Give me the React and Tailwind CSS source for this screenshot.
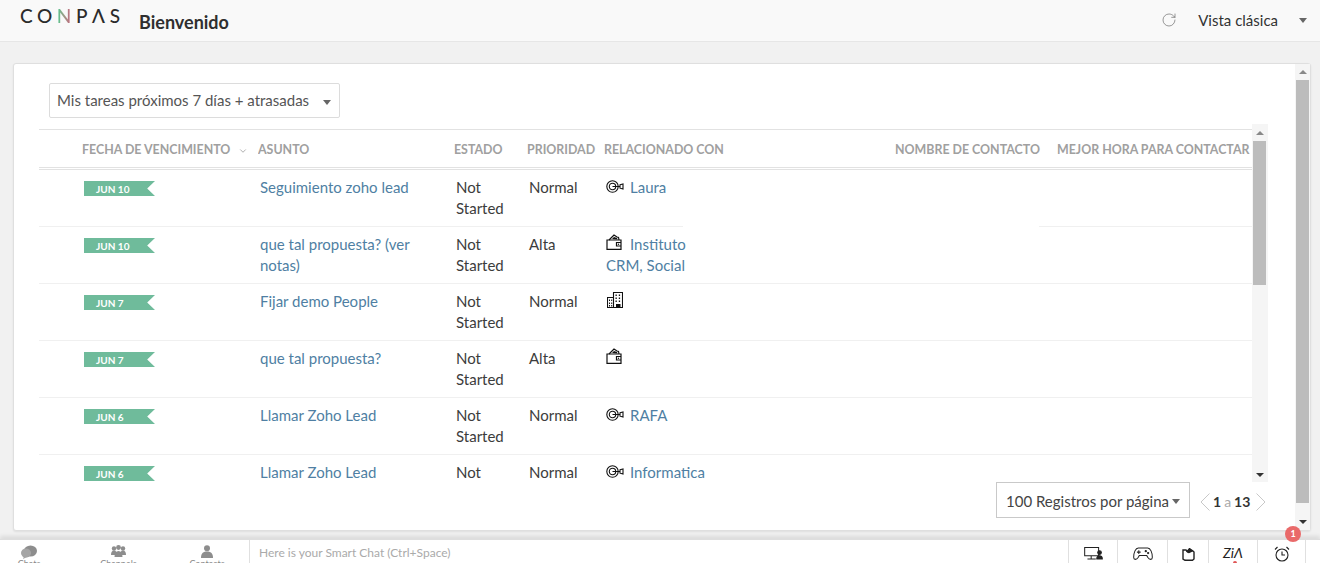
import React from "react";
import { RotateCw, ChevronDown } from "lucide-react";

const Lead = () => (
  <svg width="18" height="13" viewBox="0 0 18 13" fill="none" stroke="#111" strokeWidth="1.100" className="shrink-0 mt-[3px]">
    <circle cx="6.500" cy="6.500" r="5.700" />
    <circle cx="6.500" cy="6.500" r="3.200" />
    <path d="M6.500 6.500H14M14 4.800l3-.8v5l-3-.8z" />
  </svg>
);
const Wallet = () => (
  <svg width="16" height="16" viewBox="0 0 16 16" fill="none" stroke="#111" strokeWidth="1.200" className="shrink-0">
    <path d="M1 6h14v9.400H1zM15 8.500h-4.500v3.500H15" />
    <path d="M3 6l5-5 3 2 1.500.5.500 2.500" />
    <path d="M6 5l2-2 3 1 .5 1.500z" fill="#111" stroke="none" />
    <circle cx="12.500" cy="10.200" r=".7" fill="#111" stroke="none" />
  </svg>
);
const Building = () => (
  <svg width="16" height="16" viewBox="0 0 16 16" className="shrink-0 ml-[1px] mt-[1px]">
    <path d="M6.500 .5H15.500v15H6.500zM.5 5.500h6v10h-6z" fill="#fff" stroke="#111" strokeWidth="1.100" />
    <path d="M8.500 2.500h1.300v1.600H8.500zM11.800 2.500h1.300v1.600h-1.300zM8.500 5.500h1.300v1.600H8.500zM11.800 5.500h1.300v1.600h-1.300zM8.500 8.500h1.300v1.600H8.500zM11.800 8.500h1.300v1.600h-1.300zM9 12h4.500v3.500H9zM2 7.500h1v1.500H2zM4.200 7.500h1v1.500h-1zM2 10.500h1v1.500H2zM4.200 10.500h1v1.500h-1zM2 13h1v1.500H2zM4.200 13h1v1.500h-1z" fill="#111" />
  </svg>
);

const rows = [
  { date: "JUN 10", subject: "Seguimiento zoho lead", priority: "Normal", icon: <Lead />, rel: "Laura" },
  { date: "JUN 10", subject: "que tal propuesta? (ver notas)", priority: "Alta", icon: <Wallet />, rel: "Instituto", rel2: "CRM, Social" },
  { date: "JUN 7", subject: "Fijar demo People", priority: "Normal", icon: <Building /> },
  { date: "JUN 7", subject: "que tal propuesta?", priority: "Alta", icon: <Wallet /> },
  { date: "JUN 6", subject: "Llamar Zoho Lead", priority: "Normal", icon: <Lead />, rel: "RAFA" },
  { date: "JUN 6", subject: "Llamar Zoho Lead", priority: "Normal", icon: <Lead />, rel: "Informatica" },
];

const Caret = ({ className = "" }) => (
  <span className={`w-0 h-0 border-x-[4.5px] border-x-transparent border-t-[5px] border-t-[#666] ${className}`} />
);

const Scrollbar = ({ width, topH, thumbH, thumbX, track, className = "" }) => (
  <div className={`flex flex-col shrink-0 ${width} ${track} ${className}`}>
    <div className={`${topH} flex items-center justify-center shrink-0`}>
      <span className="w-0 h-0 border-x-[4px] border-x-transparent border-b-[4px] border-b-[#888]" />
    </div>
    <div className={`${thumbH} ${thumbX} bg-[#bcbcbc] shrink-0`} />
    <div className="flex-1" />
    <div className="h-[15px] flex items-center justify-center shrink-0">
      <span className="w-0 h-0 border-x-[4px] border-x-transparent border-t-[4px] border-t-[#333]" />
    </div>
  </div>
);

const HeaderCell = ({ w, children, className = "" }) => (
  <div className={`${w} shrink-0 whitespace-nowrap overflow-hidden ${className}`}>{children}</div>
);

function ChatIcon() {
  return (
    <svg width="16" height="14" viewBox="0 0 16 14" fill="#8d8d8d">
      <ellipse cx="9.500" cy="6" rx="6.500" ry="5.500" />
      <ellipse cx="5" cy="8" rx="5" ry="4.500" fill="#a5a5a5" />
      <path d="M3 11l-1 3 4-2z" fill="#a5a5a5" />
    </svg>
  );
}
function GroupIcon() {
  return (
    <svg width="15" height="13" viewBox="0 0 15 13" fill="#8d8d8d">
      <circle cx="3" cy="3.500" r="2.200" /><circle cx="12" cy="3.500" r="2.200" /><circle cx="7.500" cy="2.500" r="2.400" />
      <path d="M0 10c0-3 1-4.500 3-4.500S6 7 6 10zM9 10c0-3 1-4.500 3-4.500s3 1.500 3 4.500zM3.500 12c0-4 1.500-6 4-6s4 2 4 6z" />
    </svg>
  );
}
function PersonIcon() {
  return (
    <svg width="12" height="13" viewBox="0 0 12 13" fill="#8d8d8d">
      <circle cx="6" cy="3.200" r="3" /><path d="M0 13c0-4 1.500-6.500 6-6.500s6 2.500 6 6.500z" />
    </svg>
  );
}
const Nav = ({ icon, label, w }) => (
  <div className={`${w} shrink-0 flex flex-col items-center pt-[5px]`}>
    <div className="h-[13px] flex items-center">{icon}</div>
    <span className="text-[9px] leading-[10px] text-[#888] mt-[1px]">{label}</span>
  </div>
);

const Tool = ({ w, children, className = "" }) => (
  <div className={`${w} shrink-0 border-l border-[#e0e0e0] flex justify-center pt-[7px] ${className}`}>{children}</div>
);

export default function App() {
  return (
    <div className="h-[563px] w-full overflow-hidden flex flex-col bg-[#f1f1f1] text-[15px] text-[#3c3c3c] font-['Lato',sans-serif]">
      {/* top bar */}
      <header className="h-[42px] shrink-0 bg-[#f9f9f9] border-b border-[#e6e6e6] flex items-start pl-[20px] pr-[12px]">
        <div className="w-[119px] shrink-0 mt-[4px] text-[19px] leading-[24px] font-medium tracking-[4.6px] text-[#2b2b2b] whitespace-nowrap">
          CO<span className="text-transparent bg-clip-text bg-gradient-to-r from-[#35c98d] to-[#d31d78]">N</span>PΛS
        </div>
        <div className="mt-[11px] text-[18px] leading-[22px] font-bold text-[#2f2f2f]">Bienvenido</div>
        <div className="ml-auto flex items-center mt-[9px] h-[22px]">
          <RotateCw size={16} strokeWidth={1} color="#666" className="mr-[21px]" />
          <span className="text-[15px] text-[#333] mr-[21px]">Vista clásica</span>
          <Caret className="mr-[1px]" />
        </div>
      </header>

      {/* main */}
      <main className="h-[497px] shrink-0 pt-[21px] pl-[13px] pr-[9px] pb-[8px]">
        <div className="h-[468px] bg-white border border-[#dfdfdf] rounded-[3px] flex shadow-[0_1px_2px_rgba(0,0,0,0.08)]">
          <div className="flex-1 min-w-0 flex flex-col pt-[19px] pl-[25px] pr-[27px]">
            <div className="ml-[10px] w-[291px] h-[35px] shrink-0 border border-[#dcdcdc] rounded-[2px] flex items-center pl-[7px] text-[#555]">
              <span className="whitespace-nowrap">Mis tareas próximos 7 días + atrasadas</span>
              <Caret className="ml-auto mr-[8px] mt-[3px]" />
            </div>

            <div className="h-[358px] mt-[6px] shrink-0 flex overflow-hidden">
              <div className="flex-1 min-w-0 pt-[5px]">
                <div className="h-[41px] pt-[3px] border-t border-b-[3px] border-double border-[#e2e2e2] flex items-center text-[12.400px] font-bold text-[#a0a0a0]">
                  <HeaderCell w="w-[219px]" className="pl-[43px] flex items-center">
                    FECHA DE VENCIMIENTO
                    <ChevronDown size={10} strokeWidth={2} className="ml-[8px] mt-[2px]" />
                  </HeaderCell>
                  <HeaderCell w="w-[196px]">ASUNTO</HeaderCell>
                  <HeaderCell w="w-[73px]">ESTADO</HeaderCell>
                  <HeaderCell w="w-[77px]">PRIORIDAD</HeaderCell>
                  <HeaderCell w="w-[291px]">RELACIONADO CON</HeaderCell>
                  <HeaderCell w="w-[162px]">NOMBRE DE CONTACTO</HeaderCell>
                  <HeaderCell w="flex-1">MEJOR HORA PARA CONTACTAR</HeaderCell>
                </div>
                {rows.map((r, i) => (
                  <div key={i} className="relative h-[57px] border-b border-[#f0f0f0] flex pt-[7px] leading-[21px]">
                    <div className="w-[219px] shrink-0 pl-[45px] pt-[4px]">
                      <div className="w-[71px] h-[15px] bg-[#6fbb9b] text-white text-[10px] leading-[16px] font-bold pl-[12px] [clip-path:polygon(0_0,100%_0,89%_50%,100%_100%,0_100%)]">
                        {r.date}
                      </div>
                    </div>
                    <div className="w-[196px] shrink-0 pl-[2px] pr-[26px] text-[#4f7fa3]">{r.subject}</div>
                    <div className="w-[73px] shrink-0 pl-[2px] pr-[20px]">Not Started</div>
                    <div className="w-[77px] shrink-0 pl-[2px]">{r.priority}</div>
                    <div className="w-[291px] shrink-0 pl-[2px] text-[#4f7fa3]">
                      <div className="flex items-start h-[21px]">
                        <span className="w-[24px] shrink-0 flex items-start">{r.icon}</span>
                        {r.rel}
                      </div>
                      {r.rel2 && <div>{r.rel2}</div>}
                    </div>
                    {i === 0 && <span className="absolute left-[644px] w-[356px] -bottom-px h-px bg-white" />}
                  </div>
                ))}
              </div>
              <Scrollbar width="w-[16px]" topH="h-[17px]" thumbH="h-[144px]" thumbX="ml-px mr-[2px]" track="bg-[#f5f5f5]" />
            </div>

            <div className="flex items-start justify-end">
              <div className="w-[194px] h-[36px] border border-[#c9c9c9] flex items-center pl-[9px] pt-[3px] text-[#444] whitespace-nowrap">
                100 Registros por página
                <Caret className="ml-[3px]" />
              </div>
              <div className="w-[78px] h-[36px] flex items-center pl-[10px] pt-[3px] text-[14px]">
                <svg width="10" height="18" viewBox="0 0 10 18" fill="none" stroke="#c8c8c8" className="shrink-0"><path d="M9.500 .5L1 9l8.500 8.500" /></svg>
                <span className="font-bold text-[#333] ml-[3px]">1</span>
                <span className="text-[#aaa] mx-[3px]">a</span>
                <span className="font-bold text-[#333]">13</span>
                <svg width="10" height="18" viewBox="0 0 10 18" fill="none" stroke="#c8c8c8" className="shrink-0 ml-[6px]"><path d="M.5 .5L9 9 .5 17.500" /></svg>
              </div>
            </div>
          </div>
          <Scrollbar width="w-[15px]" topH="h-[16px]" thumbH="h-[423px]" thumbX="ml-px mr-px" track="bg-[#f5f5f5] pb-[1px]" />
        </div>
      </main>

      {/* bottom bar */}
      <footer className="relative h-[24px] shrink-0 bg-white border-t border-[#dedede] flex shadow-[0_-3px_4px_rgba(0,0,0,0.09)]">
        <Nav w="w-[58px]" icon={<ChatIcon />} label="Chats" />
        <Nav w="w-[121px]" icon={<GroupIcon />} label="Channels" />
        <Nav w="w-[56px]" icon={<PersonIcon />} label="Contacts" />
        <div className="ml-[14px] border-l border-[#e0e0e0] pl-[9px] text-[12px] leading-[26px] text-[#aaa] whitespace-nowrap">
          Here is your Smart Chat (Ctrl+Space)
        </div>
        <div className="ml-auto mr-[14px] flex border-r border-[#e0e0e0]">
          <Tool w="w-[49px]">
            <svg width="19" height="13" viewBox="0 0 20 14" fill="none" stroke="#222" strokeWidth="1.100"><path d="M.5 .5h15v9H.500zM7.500 9.500v3M3.500 13h9" /><circle cx="16.500" cy="6" r="2" fill="#222" /><path d="M13.500 13c0-2.500 1-3.500 3-3.500s3 1 3 3.500z" fill="#222" /></svg>
          </Tool>
          <Tool w="w-[50px]">
            <svg width="22" height="14" viewBox="0 0 22 15" fill="none" stroke="#222" strokeWidth="1.100"><path d="M6 1h10c3 0 5 5 5 10 0 3-3 3-5 0l-1-2H7l-1 2c-2 3-5 3-5 0C1 6 3 1 6 1zM6.500 3.500v4M4.500 5.500h4" /><circle cx="14" cy="4.500" r=".7" /><circle cx="16.500" cy="6.500" r=".7" /></svg>
          </Tool>
          <Tool w="w-[41px]" className="pt-[8px]">
            <svg width="13" height="13" viewBox="0 0 13 13" fill="none" stroke="#222" strokeWidth="1.400"><path d="M1 2h3l2 2 1.500-3.200L11 3l1 1v7l-1.500 1.300H3L1 11z" /><path d="M5 3.500l2.500-2.700L10 3l-3 1.500z" fill="#222" /></svg>
          </Tool>
          <Tool w="w-[49px]" className="relative !pt-[5px]">
            <span className="text-[14px] leading-[16px] italic text-[#222]">ZiΛ</span>
            <span className="absolute left-[24px] top-[21px] w-[4px] h-[4px] rounded-full bg-[#e05555]" />
          </Tool>
          <Tool w="w-[48px]" className="!pt-[6px]">
            <svg width="16" height="16" viewBox="0 0 16 16" fill="none" stroke="#222" strokeWidth="1.100"><circle cx="8" cy="9" r="6" /><path d="M8 5.500V9h3M1 3.500L3.500 1M15 3.500L12.500 1" /></svg>
          </Tool>
        </div>
        <span className="absolute left-[1285px] -top-[14px] w-[16px] h-[16px] rounded-full bg-[#e96a6a] text-white text-[9px] leading-[16px] text-center font-bold">1</span>
      </footer>
    </div>
  );
}
